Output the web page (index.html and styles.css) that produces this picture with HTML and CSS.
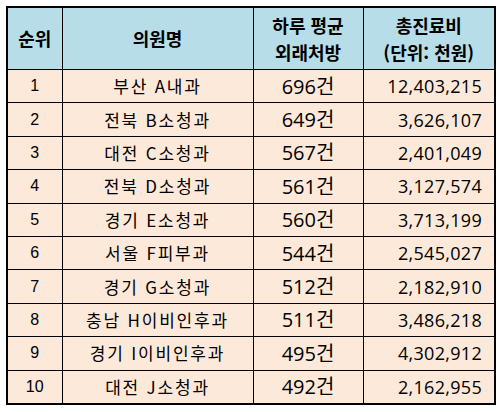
FILE: index.html
```html
<!DOCTYPE html>
<html lang="ko">
<head>
    <meta charset="utf-8" />
    <title>외래처방 순위</title>
    <link rel="stylesheet" href="styles.css">
</head>
<body>
    <table class="rank">
        <colgroup>
            <col class="cRank" />
            <col class="cName" />
            <col class="cCount" />
            <col class="cFee" />
        </colgroup>
        <thead>
            <tr>
                <th>순위</th>
                <th>의원명</th>
                <th>하루 평균<br />외래처방</th>
                <th>총진료비<br />(단위: 천원)</th>
            </tr>
        </thead>
        <tbody>
            <tr><td class="no">1</td><td class="name">부산 A내과</td><td class="cnt"><span class="n">696</span>건</td><td class="fee">12,403,215</td></tr>
            <tr><td class="no">2</td><td class="name">전북 B소청과</td><td class="cnt"><span class="n">649</span>건</td><td class="fee">3,626,107</td></tr>
            <tr><td class="no">3</td><td class="name">대전 C소청과</td><td class="cnt"><span class="n">567</span>건</td><td class="fee">2,401,049</td></tr>
            <tr><td class="no">4</td><td class="name">전북 D소청과</td><td class="cnt"><span class="n">561</span>건</td><td class="fee">3,127,574</td></tr>
            <tr><td class="no">5</td><td class="name">경기 E소청과</td><td class="cnt"><span class="n">560</span>건</td><td class="fee">3,713,199</td></tr>
            <tr><td class="no">6</td><td class="name">서울 F피부과</td><td class="cnt"><span class="n">544</span>건</td><td class="fee">2,545,027</td></tr>
            <tr><td class="no">7</td><td class="name">경기 G소청과</td><td class="cnt"><span class="n">512</span>건</td><td class="fee">2,182,910</td></tr>
            <tr><td class="no">8</td><td class="name">충남 H이비인후과</td><td class="cnt"><span class="n">511</span>건</td><td class="fee">3,486,218</td></tr>
            <tr><td class="no">9</td><td class="name">경기 I이비인후과</td><td class="cnt"><span class="n">495</span>건</td><td class="fee">4,302,912</td></tr>
            <tr><td class="no">10</td><td class="name">대전 J소청과</td><td class="cnt"><span class="n">492</span>건</td><td class="fee">2,162,955</td></tr>
        </tbody>
    </table>
</body>
</html>
```

FILE: styles.css
```css
body,
table,
th,
td {
    margin: 0;
    padding: 0
}

body {
    background: #fff;
    font-family: "Noto Sans CJK KR", sans-serif
}

.rank {
    margin: 6px;
    width: 488px;
    table-layout: fixed;
    border-collapse: collapse;
    border: 2px solid #000
}

.rank .cRank { width: 55px }
.rank .cName { width: 191px }
.rank .cCount { width: 110px }
.rank .cFee { width: 132px }

.rank th,
.rank td {
    border: 1px solid #000;
    text-align: center;
    white-space: nowrap
}

.rank th {
    height: 61px;
    background: #b7dee8;
    font-size: 18px;
    font-weight: 700;
    line-height: 27px;
    color: #000
}

.rank td {
    height: 32.4px;
    background: #fde9d9;
    color: #000;
    font-size: 17px;
    line-height: 20px
}

.rank .no { font-family: "Liberation Sans", Arial, sans-serif; font-size: 16px }
.rank .name { font-size: 17px; letter-spacing: 1.8px }
.rank .cnt { font-size: 20px }
.rank .cnt .n { font-family: "Open Sans", "Noto Sans", sans-serif }
.rank .fee {
    text-align: right;
    padding-right: 12px;
    font-family: "Open Sans", "Noto Sans", sans-serif;
    font-size: 18px;
    letter-spacing: 0.3px
}
```
